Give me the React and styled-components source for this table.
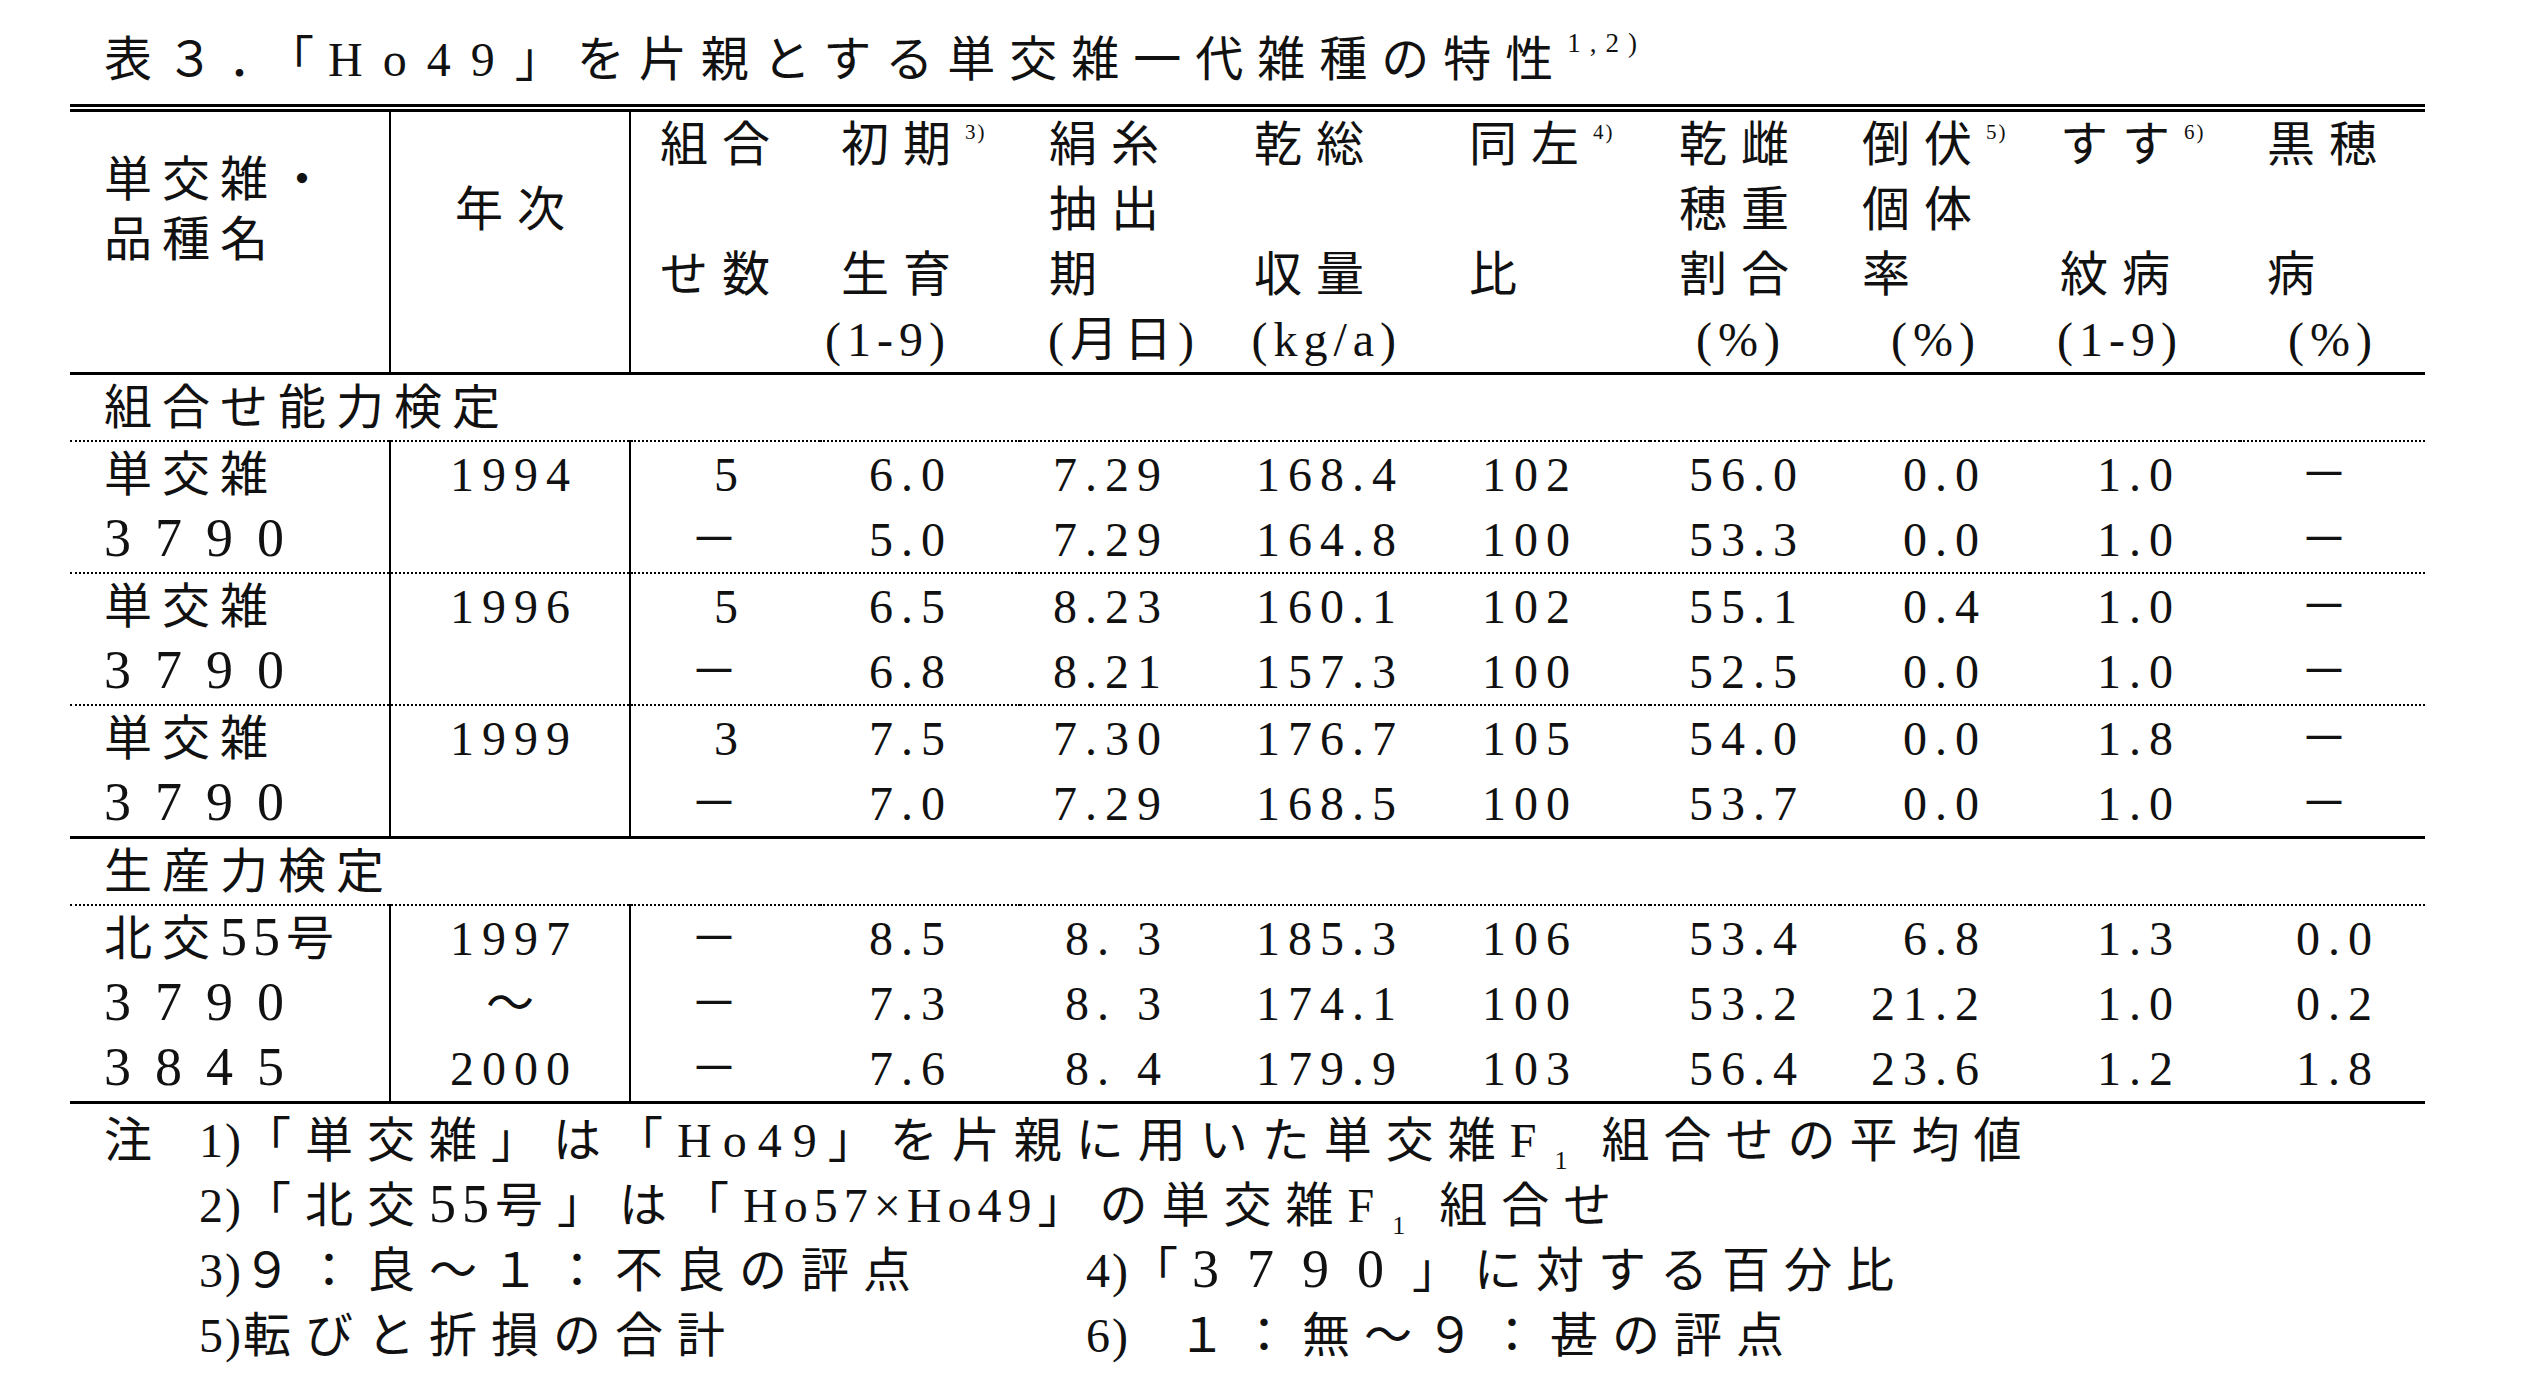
import styled, { createGlobalStyle } from 'styled-components';

const GlobalStyle = createGlobalStyle`
  html, body {
    margin: 0;
    padding: 0;
    background: #fff;
  }
  body {
    font-family: "Liberation Serif", "Noto Sans CJK JP", serif;
    color: #111;
  }
`;

const Page = styled.div`
  width: 2521px;
  height: 1398px;
  box-sizing: border-box;
  padding: 25px 96px 0 70px;
  background: #fff;
  font-size: 48px;
  overflow: hidden;
`;

const Title = styled.h1`
  margin: 0 0 9px 34px;
  font-size: 48px;
  font-weight: 400;
  line-height: 70px;
  letter-spacing: 14px;
  white-space: nowrap;
`;

const Lat = styled.span`
  letter-spacing: ${(p) => p.$ls}px;
`;

const Big = styled.span`
  font-size: 54px;
  line-height: 0;
  letter-spacing: ${(p) => p.$ls}px;
`;

const Sup = styled.span`
  font-size: ${(p) => (p.$title ? 27 : 21)}px;
  letter-spacing: ${(p) => (p.$title ? 9 : 2)}px;
  vertical-align: ${(p) => (p.$title ? 24 : 22)}px;
  line-height: 0;
`;

const Sub = styled.span`
  font-size: 26px;
  letter-spacing: 0;
  vertical-align: -12px;
  line-height: 0;
  margin: 0 34px 0 4px;
`;

const Table = styled.table`
  border-collapse: collapse;
  table-layout: fixed;
  width: 2355px;
  font-size: 48px;
  line-height: 65px;
`;

const Col = styled.col`
  width: ${(p) => p.$w}px;
`;

const HeadRow = styled.tr`
  border-top: 8px double #000;
  border-bottom: 3px solid #000;
`;

const HeadCell = styled.td`
  padding: 0;
  height: 260px;
  vertical-align: top;
  border-right: ${(p) => (p.$rule ? '2px solid #000' : 'none')};
`;

const NameHead = styled.div`
  padding: 38px 0 0 34px;
  line-height: 60px;
  letter-spacing: 10px;
  white-space: nowrap;
`;

const YearHead = styled.div`
  padding: 65px 0 0 14px;
  line-height: 65px;
  letter-spacing: 14px;
  text-align: center;
`;

const HeadLine = styled.div`
  height: 65px;
  line-height: 65px;
  white-space: nowrap;
  letter-spacing: ${(p) => (p.$unit ? 6 : 14)}px;
  text-align: ${(p) => (p.$unit ? 'right' : 'left')};
  padding: ${(p) => (p.$unit ? `0 ${p.$pr}px 0 0` : `0 0 0 ${p.$pl}px`)};
`;

const SectionRow = styled.tr`
  border-bottom: 2px dotted #000;
`;

const SectionCell = styled.td`
  padding: 0 0 0 34px;
  height: 65px;
  line-height: 65px;
  letter-spacing: 10px;
  white-space: nowrap;
`;

const DataRow = styled.tr`
  border-bottom: ${(p) =>
    p.$edge === 'solid'
      ? '3px solid #000'
      : p.$edge === 'dotted'
        ? '2px dotted #000'
        : 'none'};
`;

const NameCell = styled.td`
  padding: 0 0 0 34px;
  height: 65px;
  letter-spacing: 10px;
  white-space: nowrap;
  border-right: 2px solid #000;
`;

const YearCell = styled.td`
  padding: 0 0 0 8px;
  text-align: center;
  letter-spacing: 8px;
  white-space: nowrap;
  border-right: 2px solid #000;
`;

const NumCell = styled.td`
  padding: 0 ${(p) => p.$pr}px 0 0;
  text-align: right;
  letter-spacing: 8px;
  white-space: nowrap;
`;

const Notes = styled.div`
  margin-top: 4px;
  padding-left: 34px;
  font-size: 48px;
  letter-spacing: 14px;
  line-height: 65px;
`;

const NoteRow = styled.div`
  display: flex;
  height: 65px;
  white-space: nowrap;
`;

const NoteMark = styled.span`
  flex: none;
  width: 95px;
`;

const NoteItem = styled.span`
  flex: none;
  width: ${(p) => (p.$w ? `${p.$w}px` : 'auto')};
`;

// column widths; pl = label indent, pr = number right gap, upr = unit right gap
const COLS = [
  { w: 320 },
  { w: 240 },
  { w: 190, pl: 29, pr: 82 },
  { w: 200, pl: 21, pr: 75 },
  { w: 210, pl: 29, pr: 69, upr: 36 },
  { w: 210, pl: 24, pr: 44 },
  { w: 210, pl: 29, pr: 80 },
  { w: 190, pl: 29, pr: 43, upr: 60 },
  { w: 190, pl: 22, pr: 51, upr: 55 },
  { w: 210, pl: 30, pr: 67, upr: 63 },
  { w: 185, pl: 27, pr: 53, upr: 53, dpr: 77 },
];

const HEAD = [
  ['組合', '', 'せ数', ''],
  [['初期', '3)'], '', '生育', '(1-9)'],
  ['絹糸', '抽出', '期', '(月日)'],
  ['乾総', '', '収量', '(kg/a)'],
  [['同左', '4)'], '', '比', ''],
  ['乾雌', '穂重', '割合', '(%)'],
  [['倒伏', '5)'], '個体', '率', '(%)'],
  [['すす', '6)'], '', '紋病', '(1-9)'],
  ['黒穂', '', '病', '(%)'],
];

const SECTIONS = [
  {
    title: '組合せ能力検定',
    groups: [
      [
        ['単交雑', '1994', '5', '6.0', '7.29', '168.4', '102', '56.0', '0.0', '1.0', '－'],
        ['3790', '', '－', '5.0', '7.29', '164.8', '100', '53.3', '0.0', '1.0', '－'],
      ],
      [
        ['単交雑', '1996', '5', '6.5', '8.23', '160.1', '102', '55.1', '0.4', '1.0', '－'],
        ['3790', '', '－', '6.8', '8.21', '157.3', '100', '52.5', '0.0', '1.0', '－'],
      ],
      [
        ['単交雑', '1999', '3', '7.5', '7.30', '176.7', '105', '54.0', '0.0', '1.8', '－'],
        ['3790', '', '－', '7.0', '7.29', '168.5', '100', '53.7', '0.0', '1.0', '－'],
      ],
    ],
  },
  {
    title: '生産力検定',
    groups: [
      [
        ['北交55号', '1997', '－', '8.5', '8. 3', '185.3', '106', '53.4', '6.8', '1.3', '0.0'],
        ['3790', '～', '－', '7.3', '8. 3', '174.1', '100', '53.2', '21.2', '1.0', '0.2'],
        ['3845', '2000', '－', '7.6', '8. 4', '179.9', '103', '56.4', '23.6', '1.2', '1.8'],
      ],
    ],
  },
];

const renderName = (name) => {
  const allDigits = /^\d+$/.test(name);
  return name
    .split(/(\d+)/)
    .filter(Boolean)
    .map((part, i) =>
      /^\d+$/.test(part) ? (
        <Big key={i} $ls={allDigits ? 24 : 6}>
          {part}
        </Big>
      ) : (
        part
      ),
    );
};

const renderLabel = (label) =>
  Array.isArray(label) ? (
    <>
      {label[0]}
      <Sup>{label[1]}</Sup>
    </>
  ) : (
    label
  );

const HeaderRow = () => (
  <HeadRow>
    <HeadCell $rule>
      <NameHead>
        単交雑・
        <br />
        品種名
      </NameHead>
    </HeadCell>
    <HeadCell $rule>
      <YearHead>年次</YearHead>
    </HeadCell>
    {HEAD.map((lines, c) => {
      const col = COLS[c + 2];
      return (
        <HeadCell key={c}>
          {lines.slice(0, 3).map((l, i) => (
            <HeadLine key={i} $pl={col.pl}>
              {renderLabel(l)}
            </HeadLine>
          ))}
          <HeadLine $unit $pr={(col.upr ?? col.pr) - 6}>
            {lines[3]}
          </HeadLine>
        </HeadCell>
      );
    })}
  </HeadRow>
);

const Row = ({ cells, edge }) => (
  <DataRow $edge={edge}>
    <NameCell>{renderName(cells[0])}</NameCell>
    <YearCell>{cells[1]}</YearCell>
    {cells.slice(2).map((v, i) => {
      const col = COLS[i + 2];
      const pr = v === '－' && col.dpr ? col.dpr : col.pr;
      return (
        <NumCell key={i} $pr={pr - 8}>
          {v}
        </NumCell>
      );
    })}
  </DataRow>
);

const SectionBlock = ({ sec }) => (
  <>
    <SectionRow>
      <SectionCell colSpan={11}>{sec.title}</SectionCell>
    </SectionRow>
    {sec.groups.map((g, gi) =>
      g.map((cells, ri) => {
        const isGroupEnd = ri === g.length - 1;
        const isSectionEnd = isGroupEnd && gi === sec.groups.length - 1;
        const edge = isSectionEnd ? 'solid' : isGroupEnd ? 'dotted' : undefined;
        return <Row key={`${gi}-${ri}`} cells={cells} edge={edge} />;
      }),
    )}
  </>
);

const App = () => (
  <>
    <GlobalStyle />
    <Page>
      <Title>
        表３．「<Lat $ls={20}>Ho49</Lat>」を片親とする単交雑一代雑種の特性
        <Sup $title>1,2)</Sup>
      </Title>

      <Table>
        <colgroup>
          {COLS.map((c, i) => (
            <Col key={i} $w={c.w} />
          ))}
        </colgroup>
        <tbody>
          <HeaderRow />
          {SECTIONS.map((sec, s) => (
            <SectionBlock key={s} sec={sec} />
          ))}
        </tbody>
      </Table>

      <Notes>
        <NoteRow>
          <NoteMark>注</NoteMark>
          <NoteItem>
            <Lat $ls={2}>1)</Lat>「単交雑」は「<Lat $ls={11}>Ho49</Lat>」を片親に用いた単交雑F
            <Sub>1</Sub>組合せの平均値
          </NoteItem>
        </NoteRow>
        <NoteRow>
          <NoteMark />
          <NoteItem>
            <Lat $ls={2}>2)</Lat>「北交<Big $ls={6}>55</Big>号」は「
            <Lat $ls={6}>Ho57×Ho49</Lat>」の単交雑F<Sub>1</Sub>組合せ
          </NoteItem>
        </NoteRow>
        <NoteRow>
          <NoteMark />
          <NoteItem $w={887}>
            <Lat $ls={2}>3)</Lat>９：良～１：不良の評点
          </NoteItem>
          <NoteItem>
            <Lat $ls={2}>4)</Lat>「<Big $ls={28}>3790</Big>」に対する百分比
          </NoteItem>
        </NoteRow>
        <NoteRow>
          <NoteMark />
          <NoteItem $w={887}>
            <Lat $ls={2}>5)</Lat>転びと折損の合計
          </NoteItem>
          <NoteItem>
            <Lat $ls={2}>6)</Lat>
            <Lat $ls={0}>　</Lat>１：無～９：甚の評点
          </NoteItem>
        </NoteRow>
      </Notes>
    </Page>
  </>
);

export default App;
